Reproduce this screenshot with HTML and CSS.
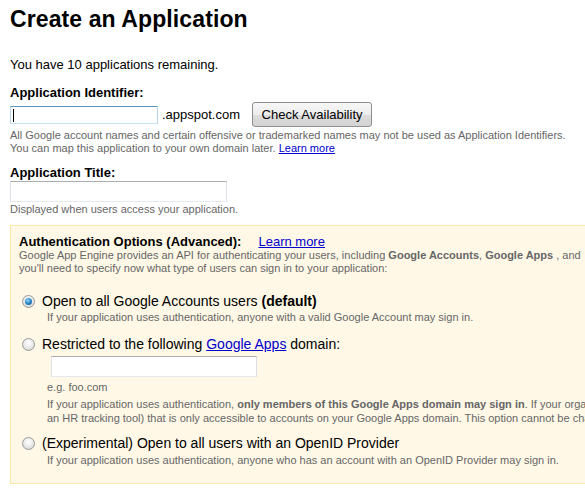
FILE: index.html
```html
<!DOCTYPE html>
<html lang="en">
<head>
<meta charset="utf-8">
<title>Create an Application</title>
<link rel="stylesheet" href="styles.css">
</head>
<body>
<div class="page">
  <h1 class="title">Create an Application</h1>
  <p class="remaining">You have 10 applications remaining.</p>

  <div class="label">Application Identifier:</div>
  <div class="id-row">
    <span class="focus-wrap">
      <input class="textbox textbox-focus textbox-id" type="text" aria-label="Application Identifier">
      <span class="caret"></span>
    </span>
    <span class="suffix">.appspot.com</span>
    <button class="btn" type="button">Check Availability</button>
  </div>
  <p class="help">All Google account names and certain offensive or trademarked names may not be used as Application Identifiers.<br>You can map this application to your own domain later. <a href="#">Learn more</a></p>

  <div class="label label-title">Application Title:</div>
  <input class="textbox textbox-title" type="text" aria-label="Application Title">
  <p class="help help-tight">Displayed when users access your application.</p>

  <div class="auth-box">
    <div class="auth-head"><span class="auth-title">Authentication Options (Advanced):</span><a class="auth-link" href="#">Learn more</a></div>
    <p class="auth-desc">Google App Engine provides an API for authenticating your users, including <b>Google Accounts</b>, <b>Google Apps</b> , and<br>you'll need to specify now what type of users can sign in to your application:</p>

    <div class="option option-first">
      <span class="radio radio-checked"></span>
      <span class="opt-label">Open to all Google Accounts users <b>(default)</b></span>
    </div>
    <p class="opt-help">If your application uses authentication, anyone with a valid Google Account may sign in.</p>

    <div class="option option-second">
      <span class="radio"></span>
      <span class="opt-label">Restricted to the following <a href="#">Google Apps</a> domain:</span>
    </div>
    <input class="textbox textbox-domain" type="text" aria-label="Google Apps domain">
    <p class="opt-help opt-example">e.g. foo.com</p>
    <p class="opt-help opt-long">If your application uses authentication, <b>only members of this Google Apps domain may sign in</b>. If your organization uses Google Apps, you can use this option to build an internal application (such as<br>an HR tracking tool) that is only accessible to accounts on your Google Apps domain. This option cannot be changed once it is set.</p>

    <div class="option option-third">
      <span class="radio"></span>
      <span class="opt-label">(Experimental) Open to all users with an OpenID Provider</span>
    </div>
    <p class="opt-help">If your application uses authentication, anyone who has an account with an OpenID Provider may sign in.</p>
  </div>
</div>
</body>
</html>
```
FILE: styles.css
```css
html, body {
  margin: 0;
  padding: 0;
  overflow: hidden;
  background: #fff;
}

.page {
  padding: 6px 0 0 10px;
  width: 900px;
  font-family: "Liberation Sans", Arial, sans-serif;
  color: #000;
}

.title {
  margin: 0;
  font-size: 23px;
  line-height: 27px;
  font-weight: bold;
  letter-spacing: 0.1px;
}

.remaining {
  margin: 24px 0 0;
  font-size: 13px;
  line-height: 15px;
}

.label {
  margin-top: 13px;
  font-size: 13px;
  line-height: 15px;
  font-weight: bold;
}

.label-title {
  margin-top: 10px;
}

.id-row {
  margin-top: 2px;
  height: 25px;
  display: flex;
  align-items: center;
}

.focus-wrap {
  position: relative;
  display: flex;
}

.textbox {
  display: block;
  box-sizing: border-box;
  margin: 0;
  padding: 0 3px;
  font-family: "Liberation Sans", Arial, sans-serif;
  font-size: 13px;
  background: #fff;
  border: 1px solid;
  border-color: #abadb3 #dbdfe6 #e3e9ef #e2e3ea;
  outline: none;
  border-radius: 0;
}

.textbox-focus {
  border-color: #5794bf #b7d5ea #c7e2f1 #b7d5ea;
}

.textbox-id {
  width: 148px;
  height: 18px;
}

.caret {
  position: absolute;
  left: 3px;
  top: 3px;
  width: 1px;
  height: 13px;
  background: #000;
}

.suffix {
  margin-left: 4px;
  font-size: 13px;
  line-height: 15px;
}

.btn {
  margin-left: 12px;
  box-sizing: border-box;
  width: 120px;
  height: 25px;
  padding: 0;
  font-family: "Liberation Sans", Arial, sans-serif;
  font-size: 13px;
  color: #000;
  border: 1px solid #8e8f8f;
  border-radius: 3px;
  background: linear-gradient(#f7f7f7 0%, #ececec 50%, #dddddd 51%, #d3d3d3 100%);
}

.help {
  margin: 2px 0 0;
  font-size: 11px;
  line-height: 13px;
  color: #666;
}

.help-tight {
  margin-top: 1px;
}

a {
  color: #0000cc;
  text-decoration: underline;
}

.textbox-title {
  margin-top: 1px;
  width: 217px;
  height: 21px;
}

.auth-box {
  margin-top: 9px;
  box-sizing: border-box;
  width: 860px;
  padding: 8px 8px 16px;
  background: #fff8e6;
  border: 1px solid #fbe8a8;
}

.auth-head {
  display: flex;
  font-size: 13px;
  line-height: 15px;
}

.auth-title {
  font-weight: bold;
}

.auth-link {
  margin-left: 17px;
}

.auth-desc {
  margin: 0;
  font-size: 11px;
  line-height: 13px;
  color: #666;
  white-space: nowrap;
}

.option {
  display: flex;
  align-items: center;
  margin-left: 3px;
  font-size: 14px;
  line-height: 16px;
}

.option-first {
  margin-top: 18px;
}

.option-second {
  margin-top: 12px;
}

.option-third {
  margin-top: 10px;
}

.opt-label {
  margin-left: 7px;
  white-space: nowrap;
}

.radio {
  box-sizing: border-box;
  width: 13px;
  height: 13px;
  border-radius: 50%;
  border: 1px solid #9a9a9a;
  background: radial-gradient(circle at 50% 35%, #ffffff 0%, #ececec 45%, #cfcfcf 100%);
  display: flex;
  align-items: center;
  justify-content: center;
  flex: none;
}

.radio-checked::after {
  content: "";
  width: 7px;
  height: 7px;
  border-radius: 50%;
  background: radial-gradient(circle at 40% 35%, #8fd6ff 0%, #2b86c6 50%, #0f4f80 100%);
}

.opt-help {
  margin: 2px 0 0 28px;
  font-size: 11px;
  line-height: 13px;
  color: #666;
  white-space: nowrap;
}

.textbox-domain {
  margin: 4px 0 0 32px;
  width: 206px;
  height: 21px;
}

.opt-example {
  margin-top: 4px;
}

.opt-long {
  margin-top: 3px;
  line-height: 14px;
}

.option-third + .opt-help {
  margin-top: 3px;
}
```
